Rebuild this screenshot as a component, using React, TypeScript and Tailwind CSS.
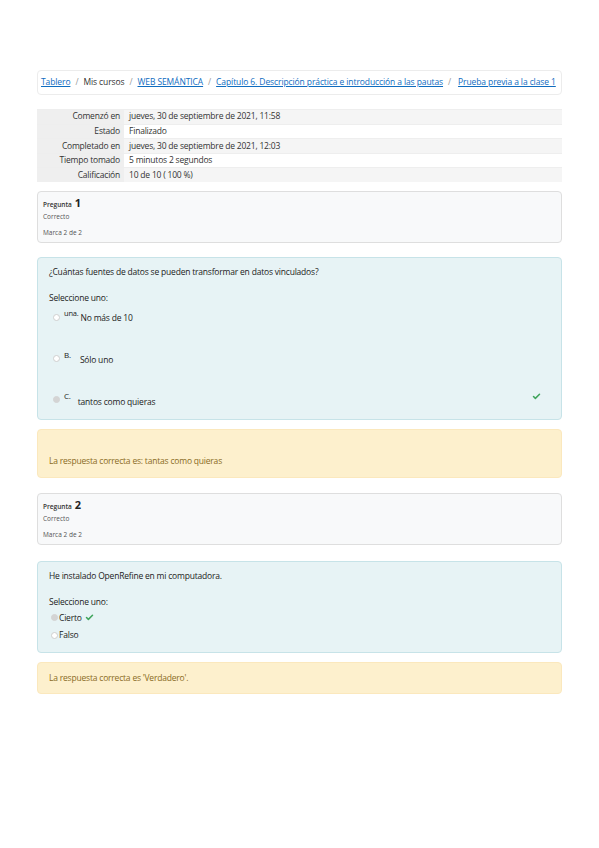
import { Check } from "lucide-react";

const font = { fontFamily: '"Open Sans", "Liberation Sans", sans-serif' };

const summary = [
  ["Comenzó en", "jueves, 30 de septiembre de 2021, 11:58"],
  ["Estado", "Finalizado"],
  ["Completado en", "jueves, 30 de septiembre de 2021, 12:03"],
  ["Tiempo tomado", "5 minutos 2 segundos"],
  ["Calificación", "10 de 10 ( 100 %)"],
];

function Radio({ checked }: { checked?: boolean }) {
  return (
    <span
      className={
        "inline-block w-[7px] h-[7px] rounded-full border shrink-0 " +
        (checked ? "bg-[#d4d4d4] border-[#d4d4d4]" : "bg-white border-[#cfcfcf]")
      }
    />
  );
}

function InfoBox({ num }: { num: number }) {
  return (
    <div className="h-[52px] border border-[#dedede] bg-[#f8f9fa] rounded-sm px-[5px] pt-[3px] text-[#444]">
      <div className="flex items-baseline gap-[3px] h-[17px]">
        <span className="text-[6.5px] font-semibold text-[#333]">Pregunta</span>
        <span className="text-[11px] font-bold text-[#222]">{num}</span>
      </div>
      <div className="text-[6.5px] h-[16px] text-[#555]">Correcto</div>
      <div className="text-[6.5px] h-[10px] text-[#555]">Marca 2 de 2</div>
    </div>
  );
}

export default function App() {
  return (
    <div className="w-full min-h-[848px] bg-white pt-[70px] px-[37px]" style={font}>
      {/* Breadcrumb */}
      <div className="h-[25px] w-[525px] border border-[#ececec] rounded-sm flex items-center px-[3px] gap-[5px] text-[8.5px] tracking-[-0.1px] whitespace-nowrap">
        <span className="text-[#0f6cbf] underline">Tablero</span>
        <span className="text-[#999]">/</span>
        <span className="text-[#333]">Mis cursos</span>
        <span className="text-[#999]">/</span>
        <span className="text-[#0f6cbf] underline">WEB SEMÁNTICA</span>
        <span className="text-[#999]">/</span>
        <span className="text-[#0f6cbf] underline">Capítulo 6. Descripción práctica e introducción a las pautas</span>
        <span className="text-[#999]">/</span>
        <span className="text-[#0f6cbf] underline ml-[2px]">Prueba previa a la clase 1</span>
      </div>

      {/* Summary table */}
      <div className="mt-[14px] w-[525px] text-[8.5px] text-[#333] tracking-[-0.2px]">
        {summary.map(([label, value], i) => (
          <div
            key={label}
            className={
              "flex h-[14.6px] items-center border-t border-[#eeeeee] " +
              (i % 2 === 0 ? "bg-[#f5f5f5]" : "bg-white")
            }
          >
            <div className="w-[87px] h-full bg-[#efefef] flex items-center justify-end pr-[4px] shrink-0">
              {label}
            </div>
            <div className="pl-[5px]">{value}</div>
          </div>
        ))}
      </div>

      {/* Question 1 */}
      <div className="mt-[9px]">
        <InfoBox num={1} />
      </div>

      <div className="mt-[14px] h-[163px] border border-[#c7e3e8] bg-[#e7f3f5] rounded-sm pl-[11px] pr-[20px] pt-[8px] text-[8.5px] text-[#222] tracking-[-0.2px]">
        <div className="h-[26px]">¿Cuántas fuentes de datos se pueden transformar en datos vinculados?</div>
        <div className="h-[16px]">Seleccione uno:</div>
        <div className="flex items-start pl-[4px] h-[41px]">
          <div className="pt-[4px]"><Radio /></div>
          <span className="ml-[4px] text-[7.5px]">una.</span>
          <span className="ml-[2px] mt-[4px]">No más de 10</span>
        </div>
        <div className="flex items-start pl-[4px] h-[41px]">
          <div className="pt-[4px]"><Radio /></div>
          <span className="ml-[4px] text-[8px]">B.</span>
          <span className="ml-[9px] mt-[5px]">Sólo uno</span>
        </div>
        <div className="flex items-start pl-[4px]">
          <div className="pt-[4px]"><Radio checked /></div>
          <span className="ml-[4px] text-[8px]">C.</span>
          <span className="ml-[7px] mt-[6px]">tantos como quieras</span>
          <Check className="ml-auto mt-[2px] text-[#3fa45b]" size={9} strokeWidth={4} />
        </div>
      </div>

      <div className="mt-[9px] h-[49px] bg-[#fdf0cd] border border-[#fbe8bd] rounded-sm pl-[11px] pt-[25px] text-[8.5px] text-[#8a6b1f] tracking-[-0.2px]">
        La respuesta correcta es: tantas como quieras
      </div>

      {/* Question 2 */}
      <div className="mt-[15px]">
        <InfoBox num={2} />
      </div>

      <div className="mt-[16px] h-[92px] border border-[#c7e3e8] bg-[#e7f3f5] rounded-sm pl-[11px] pt-[8px] text-[8.5px] text-[#222] tracking-[-0.2px]">
        <div className="h-[26px]">He instalado OpenRefine en mi computadora.</div>
        <div className="h-[13px]">Seleccione uno:</div>
        <div className="flex items-center pl-[2px] h-[18px] gap-[1px]">
          <Radio checked />
          <span>Cierto</span>
          <Check className="ml-[2px] text-[#3fa45b]" size={9} strokeWidth={4} />
        </div>
        <div className="flex items-center pl-[2px] h-[17px] gap-[1px]">
          <Radio />
          <span>Falso</span>
        </div>
      </div>

      <div className="mt-[9px] h-[32px] bg-[#fdf0cd] border border-[#fbe8bd] rounded-sm pl-[11px] flex items-center text-[8.5px] text-[#8a6b1f] tracking-[-0.2px]">
        La respuesta correcta es 'Verdadero'.
      </div>
    </div>
  );
}
